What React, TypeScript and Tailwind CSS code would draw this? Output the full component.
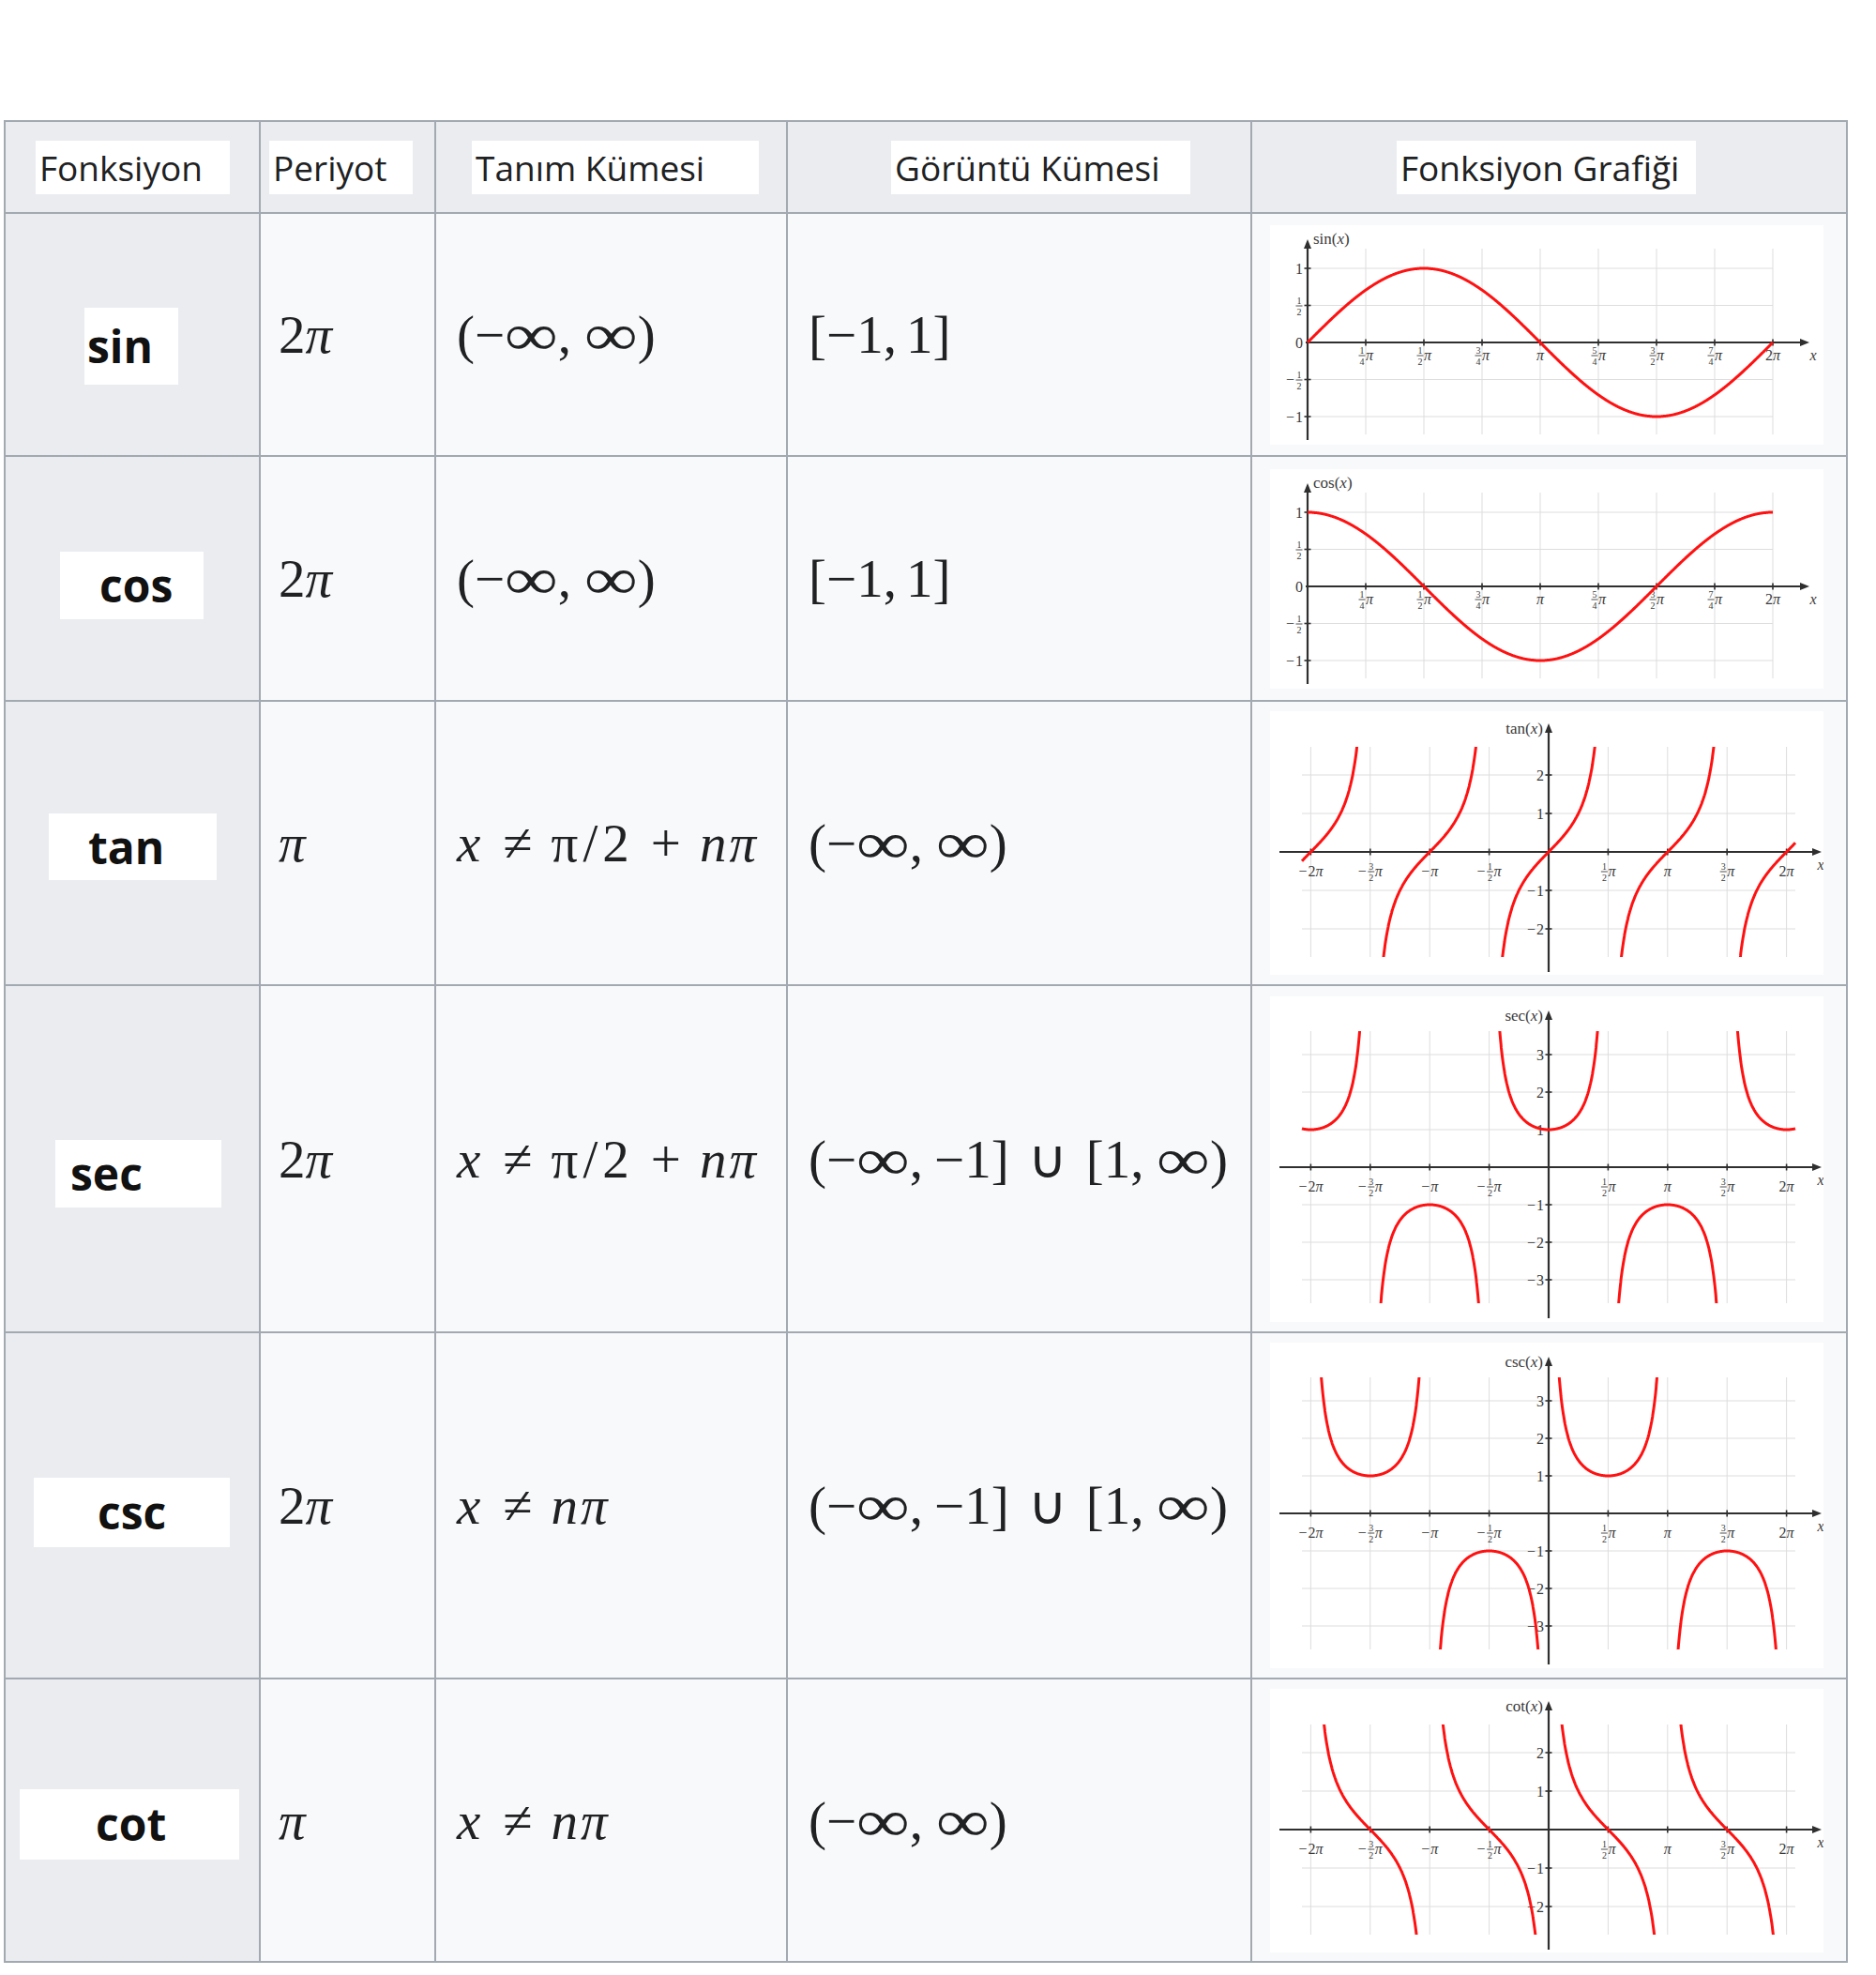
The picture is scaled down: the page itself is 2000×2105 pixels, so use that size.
import React, { useId } from "react";

const PI = Math.PI;
const SERIF = "'Liberation Serif', 'DejaVu Serif', serif";
const RED = "#ff1111";
const AXIS = "#2f2f2f";
const GRID = "#dddddd";
const INK = "#3a3a3a";

type FracSpec = { sign?: boolean; num?: string; den?: string; tail?: string };

function Tail({ s }: { s: string }) {
  return (
    <>
      {s.split("").map((c, i) =>
        c === "π" ? (
          <tspan key={i} fontStyle="italic">
            π
          </tspan>
        ) : (
          <tspan key={i}>{c}</tspan>
        )
      )}
    </>
  );
}

function TickText({ x, y, spec, anchor = "middle" }: { x: number; y: number; spec: FracSpec; anchor?: "middle" | "end" }) {
  const signW = spec.sign ? 10 : 0;
  const fracW = spec.num ? 8 : 0;
  const tailW = spec.tail ? spec.tail.length * 8 : 0;
  const w = signW + fracW + tailW;
  const sx = anchor === "middle" ? x - w / 2 : x - w;
  const fx = sx + signW + fracW / 2;
  return (
    <g fontFamily={SERIF} fill={INK}>
      {spec.sign && (
        <text x={sx} y={y} fontSize={16}>
          −
        </text>
      )}
      {spec.num && (
        <>
          <text x={fx} y={y - 7} fontSize={10} textAnchor="middle">
            {spec.num}
          </text>
          <line x1={fx - 3.5} x2={fx + 3.5} y1={y - 5} y2={y - 5} stroke={INK} strokeWidth={0.9} />
          <text x={fx} y={y + 4.5} fontSize={10} textAnchor="middle">
            {spec.den}
          </text>
        </>
      )}
      {spec.tail && (
        <text x={sx + signW + fracW} y={y} fontSize={16}>
          <Tail s={spec.tail} />
        </text>
      )}
    </g>
  );
}

type GraphDef = {
  fn: (t: number) => number;
  name: string;
  kind: "quarter" | "half";
  h: number;
  oy: number;
  yUnit: number;
  yTicks: { v: number; spec: FracSpec }[];
  gTop: number;
  gBottom: number;
  yTop: number;
  yBottom: number;
};

const quarterTicks: FracSpec[] = [
  { num: "1", den: "4", tail: "π" },
  { num: "1", den: "2", tail: "π" },
  { num: "3", den: "4", tail: "π" },
  { tail: "π" },
  { num: "5", den: "4", tail: "π" },
  { num: "3", den: "2", tail: "π" },
  { num: "7", den: "4", tail: "π" },
  { tail: "2π" },
];

const halfTicks: { k: number; spec: FracSpec }[] = [
  { k: -4, spec: { sign: true, tail: "2π" } },
  { k: -3, spec: { sign: true, num: "3", den: "2", tail: "π" } },
  { k: -2, spec: { sign: true, tail: "π" } },
  { k: -1, spec: { sign: true, num: "1", den: "2", tail: "π" } },
  { k: 1, spec: { num: "1", den: "2", tail: "π" } },
  { k: 2, spec: { tail: "π" } },
  { k: 3, spec: { num: "3", den: "2", tail: "π" } },
  { k: 4, spec: { tail: "2π" } },
];

function Graph({ g }: { g: GraphDef }) {
  const id = useId().replace(/:/g, "");
  const W = 590;
  const q = g.kind === "quarter";
  const ox = q ? 40 : 297;
  const xs = q ? 62 / (PI / 4) : 63.4 / (PI / 2);
  const gLeft = q ? 40 : 34;
  const gRight = q ? 536 : 560;
  const xAxisL = q ? 38 : 10;
  const xAxisR = q ? 575 : 588;
  const ticks = q
    ? quarterTicks.map((spec, i) => ({ px: ox + ((i + 1) * PI * xs) / 4, spec }))
    : halfTicks.map((t) => ({ px: ox + (t.k * PI * xs) / 2, spec: t.spec }));
  const t0 = q ? 0 : (gLeft - ox) / xs;
  const t1 = q ? 2 * PI : (gRight - ox) / xs;
  const lim = (g.oy - g.gTop) / g.yUnit + 0.6;

  // sample the curve, breaking the path at asymptotes
  let d = "";
  let prev: number | null = null;
  const N = 1800;
  for (let i = 0; i <= N; i++) {
    const t = t0 + ((t1 - t0) * i) / N;
    let v = g.fn(t);
    if (!isFinite(v)) v = lim;
    v = Math.max(-lim, Math.min(lim, v));
    const px = ox + t * xs;
    const py = g.oy - v * g.yUnit;
    d += prev === null || Math.abs(v - prev) > lim ? `M${px.toFixed(1)},${py.toFixed(1)}` : `L${px.toFixed(1)},${py.toFixed(1)}`;
    prev = v;
  }

  const labelY = q ? g.oy + 19 : g.oy + 26;

  return (
    <svg width={W} height={g.h} className="block">
      <defs>
        <clipPath id={`c${id}`}>
          <rect x={gLeft - 1} y={g.gTop} width={gRight - gLeft + 2} height={g.gBottom - g.gTop} />
        </clipPath>
      </defs>
      {ticks.map((t, i) => (
        <line key={`v${i}`} x1={t.px} x2={t.px} y1={g.gTop} y2={g.gBottom} stroke={GRID} strokeWidth={1} />
      ))}
      {g.yTicks.map((t, i) => (
        <line key={`h${i}`} x1={gLeft} x2={gRight} y1={g.oy - t.v * g.yUnit} y2={g.oy - t.v * g.yUnit} stroke={GRID} strokeWidth={1} />
      ))}
      <line x1={xAxisL} x2={xAxisR - 8} y1={g.oy} y2={g.oy} stroke={AXIS} strokeWidth={2.2} />
      <polygon points={`${xAxisR},${g.oy} ${xAxisR - 10},${g.oy - 4} ${xAxisR - 10},${g.oy + 4}`} fill={AXIS} />
      <line x1={ox} x2={ox} y1={g.yBottom} y2={g.yTop + 8} stroke={AXIS} strokeWidth={2.2} />
      <polygon points={`${ox},${g.yTop} ${ox - 4},${g.yTop + 10} ${ox + 4},${g.yTop + 10}`} fill={AXIS} />
      {ticks.map((t, i) => (
        <line key={`tx${i}`} x1={t.px} x2={t.px} y1={g.oy - 3.5} y2={g.oy + 3.5} stroke={AXIS} strokeWidth={1.6} />
      ))}
      {g.yTicks.map((t, i) => (
        <line key={`ty${i}`} x1={ox - 3.5} x2={ox + 3.5} y1={g.oy - t.v * g.yUnit} y2={g.oy - t.v * g.yUnit} stroke={AXIS} strokeWidth={1.6} />
      ))}
      {ticks.map((t, i) => (
        <TickText key={`lx${i}`} x={t.px} y={labelY} spec={t.spec} />
      ))}
      {g.yTicks.map((t, i) => (
        <TickText key={`ly${i}`} x={ox - 5} y={g.oy - t.v * g.yUnit + 5.5} spec={t.spec} anchor="end" />
      ))}
      {q && <TickText x={ox - 5} y={g.oy + 5.5} spec={{ tail: "0" }} anchor="end" />}
      <text x={q ? 579 : 587} y={g.oy + 19} fontSize={16} fontStyle="italic" fontFamily={SERIF} fill={INK} textAnchor="middle">
        x
      </text>
      <text x={q ? ox + 6 : ox - 6} y={q ? 20 : g.yTop + 11} fontSize={17} fontFamily={SERIF} fill={INK} textAnchor={q ? "start" : "end"}>
        {g.name}(<tspan fontStyle="italic">x</tspan>)
      </text>
      <path d={d} fill="none" stroke={RED} strokeWidth={3} strokeLinejoin="round" clipPath={`url(#c${id})`} />
    </svg>
  );
}

const quarterY = [
  { v: 1, spec: { tail: "1" } },
  { v: 0.5, spec: { num: "1", den: "2" } },
  { v: -0.5, spec: { sign: true, num: "1", den: "2" } },
  { v: -1, spec: { sign: true, tail: "1" } },
];
const intY = (n: number) =>
  Array.from({ length: n * 2 }, (_, i) => {
    const v = i < n ? n - i : n - i - 1;
    return { v, spec: v < 0 ? { sign: true, tail: String(-v) } : { tail: String(v) } };
  });

const quarterBase = { kind: "quarter" as const, h: 234, oy: 125, yUnit: 79, yTicks: quarterY, gTop: 25, gBottom: 223, yTop: 15, yBottom: 229 };
const tanBase = { kind: "half" as const, h: 281, oy: 150, yUnit: 41, yTicks: intY(2), gTop: 38, gBottom: 262, yTop: 13, yBottom: 278 };
const secBase = { kind: "half" as const, h: 347, oy: 182, yUnit: 40, yTicks: intY(3), gTop: 37, gBottom: 327, yTop: 15, yBottom: 343 };

// widened infinity sign, closer to the TeX glyph
const Inf = () => <span className="mx-[8px] inline-block scale-x-[1.4] scale-y-[1.1]">∞</span>;

const RealLine = () => (
  <>
    (−
    <Inf />,<span className="ml-[14px]" />
    <Inf />)
  </>
);

const NotHalfPi = () => (
  <>
    <i>x</i>
    <span className="ml-[24px]">≠</span>
    <span className="ml-[20px] tracking-[5px]">π/2</span>
    <span className="ml-[18px]">+</span>
    <i className="ml-[20px] tracking-[3px]">nπ</i>
  </>
);

const NotPi = () => (
  <>
    <i>x</i>
    <span className="ml-[24px]">≠</span>
    <i className="ml-[20px] tracking-[3px]">nπ</i>
  </>
);

const OutsideUnit = () => (
  <>
    (−
    <Inf />,<span className="ml-[12px]">−1]</span>
    <span className="mx-[20px]">∪</span>[1,<span className="ml-[14px]" />
    <Inf />)
  </>
);

const TwoPi = () => (
  <>
    2<i>π</i>
  </>
);

const UnitRange = () => (
  <>
    [−1,<span className="ml-[10px]">1</span>]
  </>
);

const rows = [
  {
    name: "sin",
    h: "h-[259px]",
    shift: "pt-[24px]",
    box: "ml-[84px] w-[100px] h-[82px] pl-[3px]",
    period: <TwoPi />,
    domain: <RealLine />,
    range: <UnitRange />,
    graph: { ...quarterBase, name: "sin", fn: Math.sin },
  },
  {
    name: "cos",
    h: "h-[261px]",
    shift: "pt-[14px]",
    box: "ml-[58px] w-[153px] h-[72px] pl-[42px]",
    period: <TwoPi />,
    domain: <RealLine />,
    range: <UnitRange />,
    graph: { ...quarterBase, name: "cos", fn: Math.cos },
  },
  {
    name: "tan",
    h: "h-[303px]",
    shift: "pt-[8px]",
    box: "ml-[46px] w-[179px] h-[71px] pl-[42px]",
    period: <i>π</i>,
    domain: <NotHalfPi />,
    range: <RealLine />,
    graph: { ...tanBase, name: "tan", fn: Math.tan },
  },
  {
    name: "sec",
    h: "h-[370px]",
    shift: "pt-[32px]",
    box: "ml-[53px] w-[177px] h-[72px] pl-[16px]",
    period: <TwoPi />,
    domain: <NotHalfPi />,
    range: <OutsideUnit />,
    graph: { ...secBase, name: "sec", fn: (t: number) => 1 / Math.cos(t) },
  },
  {
    name: "csc",
    h: "h-[369px]",
    shift: "pt-[14px]",
    box: "ml-[30px] w-[209px] h-[74px] pl-[68px]",
    period: <TwoPi />,
    domain: <NotPi />,
    range: <OutsideUnit />,
    graph: { ...secBase, name: "csc", fn: (t: number) => 1 / Math.sin(t) },
  },
  {
    name: "cot",
    h: "h-[302px]",
    shift: "pt-[8px]",
    box: "ml-[15px] w-[234px] h-[75px] pl-[81px]",
    period: <i>π</i>,
    domain: <NotPi />,
    range: <RealLine />,
    graph: { ...tanBase, name: "cot", fn: (t: number) => Math.cos(t) / Math.sin(t) },
  },
];

const headers = [
  { text: "Fonksiyon", box: "ml-[32px] w-[207px]" },
  { text: "Periyot", box: "ml-[9px] w-[153px]" },
  { text: "Tanım Kümesi", box: "ml-[38px] w-[306px]" },
  { text: "Görüntü Kümesi", box: "ml-[110px] w-[319px]" },
  { text: "Fonksiyon Grafiği", box: "ml-[154px] w-[319px]" },
];

const cell = "border-2 border-[#a2a9b1] p-0 align-middle";
const mathCell = `${cell} bg-[#f8f9fa] text-[57px] leading-none text-[#202122] font-['Liberation_Serif',serif] whitespace-nowrap`;

export default function App() {
  return (
    <div className="min-h-[2105px] bg-white pl-[4px] pt-[128px]">
      <table className="w-[1964px] table-fixed border-collapse">
        <colgroup>
          <col className="w-[272px]" />
          <col className="w-[187px]" />
          <col className="w-[375px]" />
          <col className="w-[495px]" />
          <col className="w-[635px]" />
        </colgroup>
        <thead>
          <tr className="h-[98px]">
            {headers.map((hd) => (
              <th key={hd.text} className={`${cell} bg-[#eaecf0] text-left font-normal`}>
                <div className={`${hd.box} flex h-[57px] items-center bg-white pl-[4px] pt-[2px] font-['Open_Sans',sans-serif] text-[37px] text-[#202122]`}>
                  {hd.text}
                </div>
              </th>
            ))}
          </tr>
        </thead>
        <tbody>
          {rows.map((r) => (
            <tr key={r.name} className={r.h}>
              <th className={`${cell} ${r.shift} bg-[#eaecf0] text-left`}>
                <div className={`${r.box} flex items-center bg-white font-['Open_Sans',sans-serif] text-[48px] font-bold text-[#111]`}>{r.name}</div>
              </th>
              <td className={`${mathCell} pl-[19px]`}>{r.period}</td>
              <td className={`${mathCell} pl-[22px]`}>{r.domain}</td>
              <td className={`${mathCell} pl-[22px]`}>{r.range}</td>
              <td className={`${cell} bg-[#f8f9fa]`}>
                <div className="ml-[19px] w-[590px] bg-white">
                  <Graph g={r.graph} />
                </div>
              </td>
            </tr>
          ))}
        </tbody>
      </table>
    </div>
  );
}
